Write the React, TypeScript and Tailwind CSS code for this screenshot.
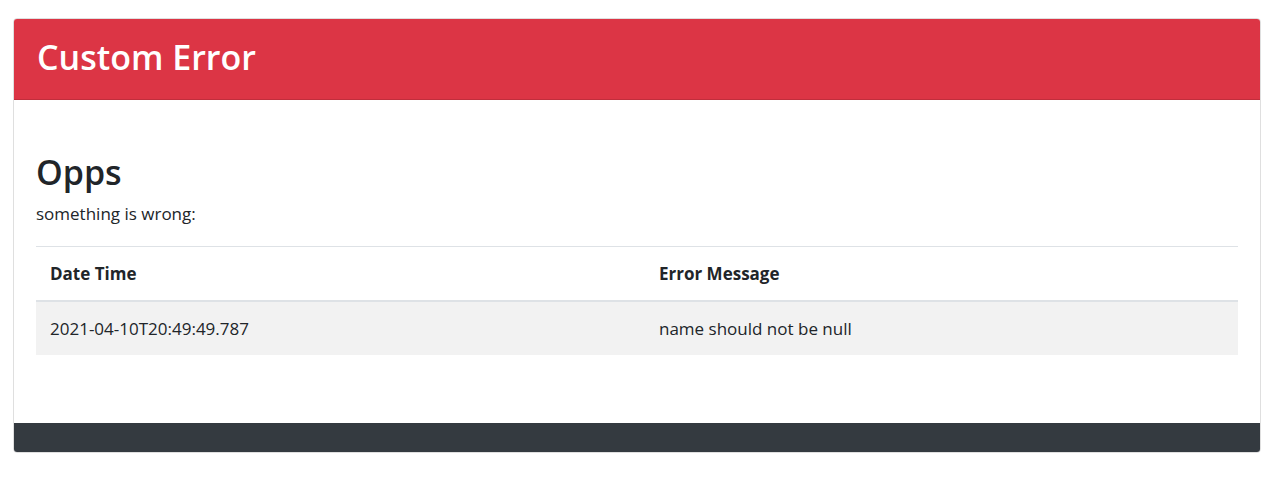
export default function App() {
    const rows = [{ time: "2021-04-10T20:49:49.787", message: "name should not be null" }]

    return (
        <div className="min-h-[501px] bg-white pt-[18px] px-[13px] font-['Open_Sans',sans-serif] text-[#212529]">
            <div className="w-[1248px] overflow-hidden rounded-[4px] border border-[rgba(0,0,0,0.125)]">
                <div className="flex h-[81px] items-center border-b border-[rgba(0,0,0,0.125)] bg-[#dc3545] px-[23px] pb-[5px]">
                    <h1 className="text-[34px] font-semibold leading-none text-white">Custom Error</h1>
                </div>

                <div className="px-[22px] pt-[53px] pb-[68px]">
                    <h2 className="text-[34px] font-semibold leading-[38px]">Opps</h2>
                    <p className="mt-[11px] text-[17px] leading-[24px]">something is wrong:</p>
                    <div className="mt-[20px] h-px bg-[#dee2e6]" />

                    <div className="text-[17px]">
                        <div className="grid h-[55px] grid-cols-[611px_1fr] items-center border-b-2 border-[#dee2e6] font-bold">
                            <div className="px-[14px]">Date Time</div>
                            <div className="px-[12px]">Error Message</div>
                        </div>
                        {rows.map((r) => (
                            <div
                                key={r.time}
                                className="grid h-[53px] grid-cols-[611px_1fr] items-center bg-[#f2f2f2]"
                            >
                                <div className="px-[14px]">{r.time}</div>
                                <div className="px-[12px]">{r.message}</div>
                            </div>
                        ))}
                    </div>
                </div>

                <div className="h-[29px] bg-[#343a40]" />
            </div>
        </div>
    )
}
